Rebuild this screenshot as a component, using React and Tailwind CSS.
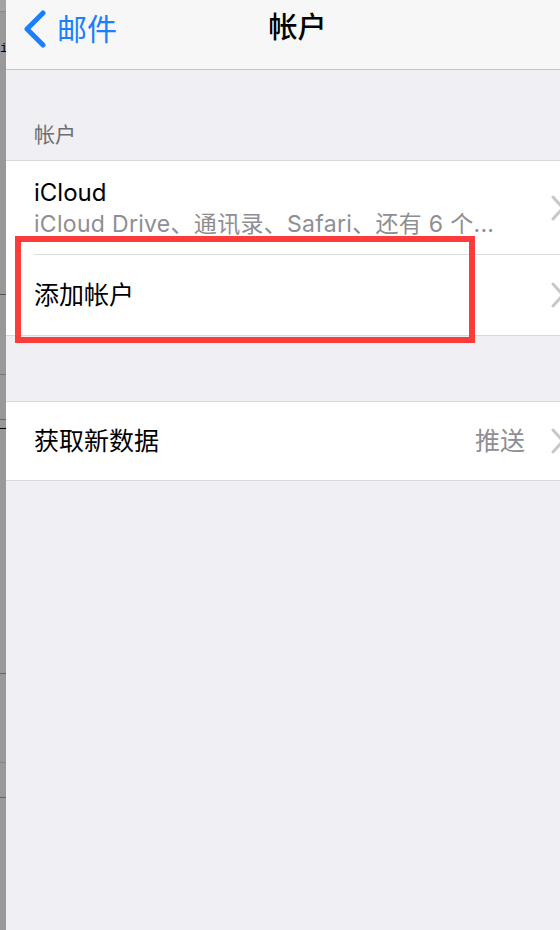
import React from "react";

const font = { fontFamily: '"Inter", "Noto Sans CJK SC", sans-serif' };

function Chevron() {
  return (
    <svg width="14" height="26" viewBox="0 0 14 26" className="shrink-0 -mr-[5px]">
      <path d="M2 2 L12 13 L2 24" fill="none" stroke="#c7c7cc" strokeWidth="3" strokeLinecap="round" strokeLinejoin="round" />
    </svg>
  );
}

function SideStrip() {
  return (
    <div className="w-[6px] shrink-0 h-full bg-[#999999] flex flex-col">
      <div className="h-[12px] bg-[#a3a3a3] border-b border-[#8a8a8a]" />
      <div className="h-[45px] relative">
        <span className="absolute top-[30px] left-0 text-[13px] leading-none text-black font-mono">i</span>
      </div>
      <div className="h-[238px] border-b border-[#555]" />
      <div className="h-[80px] border-b border-[#777]" />
      <div className="h-[45px] border-b border-[#666]" />
      <div className="h-[9px] border-b border-black" />
      <div className="h-[245px] border-b border-[#666]" />
      <div className="h-[89px] border-b border-[#888]" />
      <div className="h-[35px] border-b border-[#666]" />
    </div>
  );
}

export default function App() {
  return (
    <div className="w-[560px] h-[930px] overflow-hidden flex bg-[#efeff4]" style={font}>
      <SideStrip />
      <div className="flex-1 relative">
        {/* nav bar */}
        <div className="h-[70px] bg-[#f7f7f8] border-b border-[#c4c4c7] relative flex items-start pt-[10px]">
          <div className="flex items-center pl-[16px] text-[#1a7ffb]">
            <svg width="26" height="38" viewBox="0 0 26 38">
              <path d="M21 3 L5 19 L21 35" fill="none" stroke="#1a7ffb" strokeWidth="5" strokeLinecap="round" strokeLinejoin="round" />
            </svg>
            <span className="ml-[9px] text-[30px] leading-[36px]">邮件</span>
          </div>
          <div className="absolute left-0 right-0 top-[10px] text-center text-[29px] leading-[36px] font-medium text-black pl-[29px]">
            帐户
          </div>
        </div>

        {/* section header */}
        <div className="h-[90px] flex items-end pl-[28px] pb-[13px] text-[21px] leading-[24px] text-[#6d6d72]">
          帐户
        </div>

        {/* accounts group */}
        <div className="bg-white border-y border-[#d9d9dc]">
          <div className="h-[93px] flex items-center pl-[28px]">
            <div className="flex-1 min-w-0 pt-[3px]">
              <div className="text-[24px] leading-[30px] text-black">iCloud</div>
              <div className="text-[23px] leading-[32px] tracking-[0.3px] text-[#8e8e93] whitespace-nowrap">
                iCloud Drive、通讯录、Safari、还有 6 个...
              </div>
            </div>
            <Chevron />
          </div>
          <div className="ml-[28px] border-t border-[#dcdcdf]" />
          <div className="h-[80px] flex items-center pl-[28px]">
            <div className="flex-1 text-[25px] leading-[30px] text-black">添加帐户</div>
            <Chevron />
          </div>
        </div>

        <div className="h-[65px]" />

        {/* fetch group */}
        <div className="bg-white border-y border-[#d9d9dc]">
          <div className="h-[78px] flex items-center pl-[28px]">
            <div className="flex-1 text-[25px] leading-[30px] text-black">获取新数据</div>
            <span className="text-[25px] leading-[30px] text-[#8e8e93] mr-[26px]">推送</span>
            <Chevron />
          </div>
        </div>

        {/* red highlight box */}
        <div className="absolute left-[9px] top-[236px] w-[460px] h-[107px] border-[6px] border-[#fc3b3b]" />
      </div>
    </div>
  );
}
